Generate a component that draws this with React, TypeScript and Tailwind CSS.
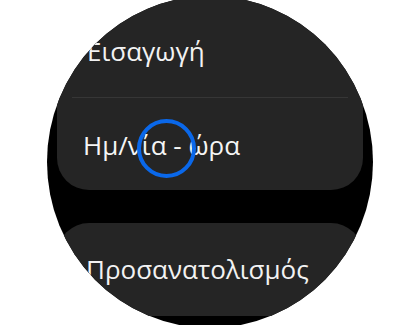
export default function App() {
  return (
    <div className="w-[420px] h-[325px] bg-white overflow-hidden relative" style={{ fontFamily: "'Open Sans', Roboto, sans-serif" }}>
      <div className="ml-[47px] mt-[-4px] w-[326px] h-[332px] rounded-[50%] overflow-hidden bg-black px-[10px]">
        <div className="bg-[#252525] rounded-b-[32px]">
          <div className="h-[101px] pt-[42px] pl-[30px]">
            <span className="text-[26px] leading-[26px] text-[#f2f2f2]">Εισαγωγή</span>
          </div>
          <div className="h-px bg-[#363636] mx-[15px]" />
          <div className="h-[92px] pt-[34px] pl-[26px]">
            <span className="text-[26px] leading-[26px] text-[#f5f5f5]">Ημ/νία - ώρα</span>
          </div>
        </div>
        <div className="mt-[33px] h-[93px] bg-[#252525] rounded-t-[32px] pt-[33px] pl-[29px]">
          <span className="text-[26px] leading-[26px] text-[#f2f2f2]">Προσανατολισμός</span>
        </div>
      </div>
      <div className="absolute left-[137px] top-[119px] w-[59px] h-[59px] rounded-full border-[4px] border-[#0a68ea]" />
    </div>
  );
}
